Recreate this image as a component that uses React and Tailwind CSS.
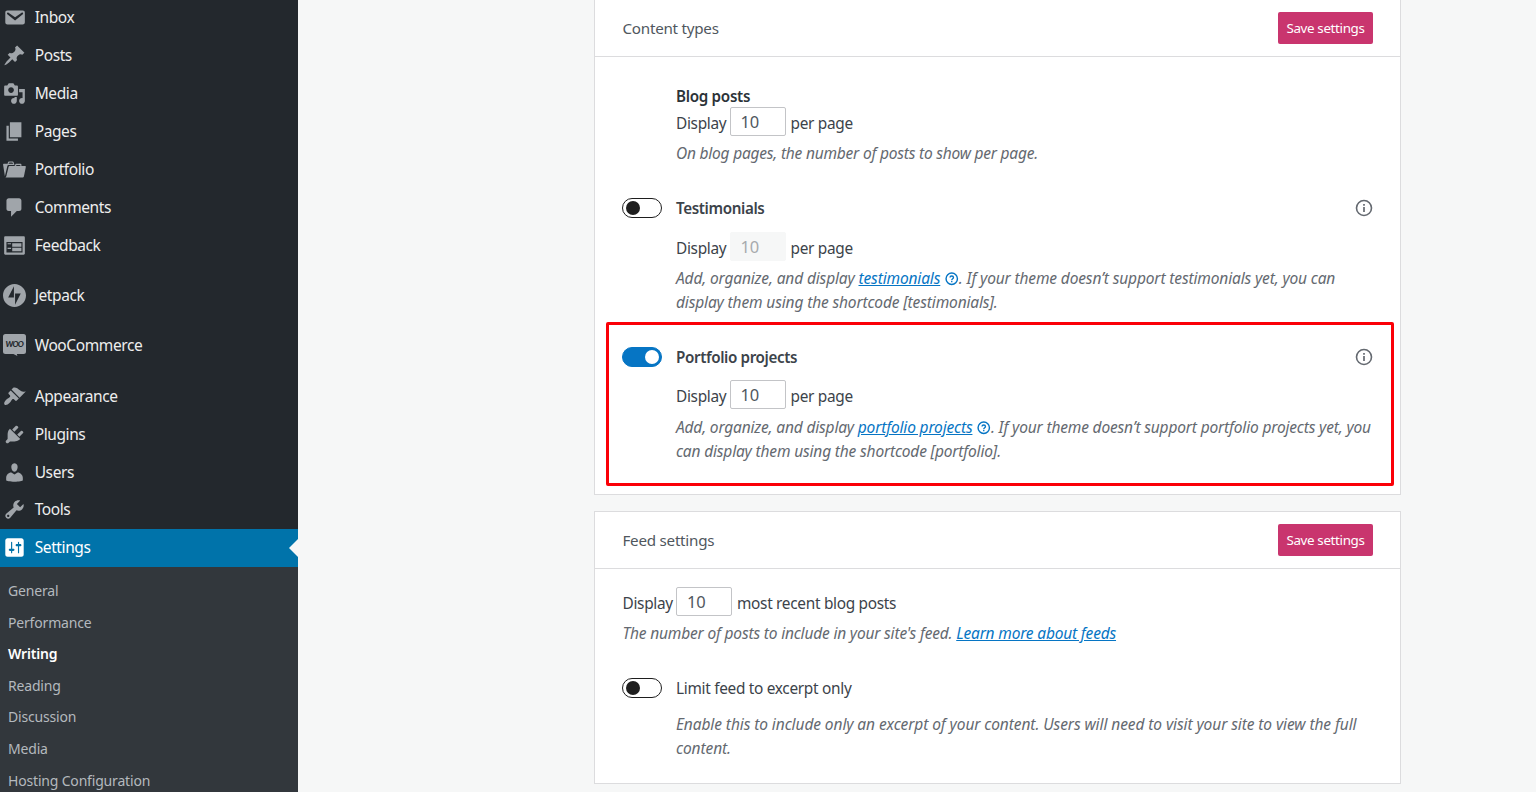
import React, { useState } from 'react'
import clsx from 'clsx'

const ICONS = {
  inbox: 'M3.87 4h13.25C18.37 4 19 4.59 19 5.79v8.42c0 1.19-.63 1.79-1.88 1.79H3.87c-1.25 0-1.88-.6-1.88-1.79V5.79c0-1.2.63-1.79 1.88-1.79zm6.62 8.6l6.74-5.53c.24-.2.43-.66.13-1.07-.29-.41-.82-.42-1.17-.17l-5.7 3.86L4.8 5.83c-.35-.25-.88-.24-1.17.17-.3.41-.11.87.13 1.07z',
  posts: 'M10.44 3.02l1.82-1.82 6.36 6.35-1.83 1.82c-1.05-.68-2.48-.57-3.41.36l-.75.75c-.92.93-1.04 2.35-.35 3.41l-1.83 1.82-2.41-2.41-2.8 2.79c-.42.42-3.38 2.71-3.8 2.29s1.86-3.39 2.28-3.81l2.79-2.79L4.1 9.36l1.83-1.82c1.05.69 2.48.57 3.4-.36l.75-.75c.93-.92 1.05-2.35.36-3.41z',
  media: 'M13 11V4c0-.55-.45-1-1-1h-1.67L9 1H5L3.67 3H2c-.55 0-1 .45-1 1v7c0 .55.45 1 1 1h10c.55 0 1-.45 1-1zM7 4.5c1.38 0 2.5 1.12 2.5 2.5S8.38 9.5 7 9.5 4.5 8.38 4.5 7 5.62 4.5 7 4.5zM14 6h5v10.5c0 1.38-1.12 2.5-2.5 2.5S14 17.88 14 16.5s1.12-2.5 2.5-2.5c.17 0 .34.02.5.05V9h-3V6zm-4 8.05V13h2v3.5c0 1.38-1.12 2.5-2.5 2.5S7 17.88 7 16.5 8.12 14 9.5 14c.17 0 .34.02.5.05z',
  pages: 'M6 15V2h10v13H6zm-1 1h8v2H3V5h2v11z',
  portfolio: 'M4 5H.78c-.37 0-.74.32-.69.84l1.56 9.99S3.5 8.47 3.86 6.7c.11-.53.61-.7.98-.7H10s-.7-2.08-.77-2.31C9.11 3.25 8.89 3 8.45 3H5.14c-.36 0-.7.23-.8.64C4.25 4.04 4 5 4 5zm4.88 0h-4s.42-1 .87-1h2.13c.48 0 1 1 1 1zM2.67 16.25c-.31.47-.76.75-1.26.75h15.73c.54 0 .92-.31 1.03-.83.44-2.19 1.68-8.44 1.68-8.44.07-.5-.3-.73-.62-.73H16V5.53c0-.16-.26-.53-.66-.53h-3.76c-.52 0-.87.58-.87.58L10 7H5.59c-.32 0-.63.19-.69.5 0 0-1.59 6.7-1.72 7.33-.07.37-.22.99-.51 1.42zM15.38 7H11s.58-1 1.13-1h2.29c.71 0 .96 1 .96 1z',
  comments: 'M5 2h9c1.1 0 2 .9 2 2v7c0 1.1-.9 2-2 2h-2l-5 5v-5H5c-1.1 0-2-.9-2-2V4c0-1.1.9-2 2-2z',
  feedback: 'M2 2h16c.55 0 1 .45 1 1v14c0 .55-.45 1-1 1H2c-.55 0-1-.45-1-1V3c0-.55.45-1 1-1zm15 14V7H3v9h14zM4 8v1h3V8H4zm4 0v3h8V8H8zm-4 4v1h3v-1H4zm4 0v3h8v-3H8z',
  appearance: 'M14.48 11.06L7.41 3.99l1.5-1.5c.5-.56 2.3-.47 3.51.32 1.21.8 1.43 1.28 2.91 2.1 1.18.64 2.45 1.26 4.45.85zm-.71.71L6.7 4.7 4.93 6.47c-.39.39-.39 1.02 0 1.41l1.06 1.06c.39.39.39 1.03 0 1.42-.6.6-1.43 1.11-2.21 1.69-.35.26-.7.53-1.01.84C1.43 14.23.4 16.08 1.4 17.07c.99 1 2.84-.03 4.18-1.36.31-.31.58-.66.85-1.02.57-.78 1.08-1.61 1.69-2.21.39-.39 1.02-.39 1.41 0l1.06 1.06c.39.39 1.02.39 1.41 0z',
  plugins: 'M13.11 4.36L9.87 7.6 8 5.73l3.24-3.24c.35-.34 1.05-.2 1.56.32.52.51.66 1.21.31 1.55zm-8 1.77l.91-1.12 9.01 9.01-1.19.84c-.71.71-2.63 1.16-3.82 1.16H6.14L4.9 17.26c-.59.59-1.54.59-2.12 0-.59-.58-.59-1.53 0-2.12l1.24-1.24v-3.88c0-1.13.4-3.19 1.09-3.89zm7.26 3.97l3.24-3.24c.34-.35 1.04-.21 1.55.31.52.51.66 1.21.31 1.55l-3.24 3.25z',
  users: 'M10 9.25c-2.27 0-2.73-3.44-2.73-3.44C7 4.02 7.82 2 9.97 2c2.16 0 2.98 2.02 2.71 3.81 0 0-.41 3.44-2.68 3.44zm0 2.57L12.72 10c2.39 0 4.52 2.33 4.52 4.53v2.49s-3.65 1.13-7.24 1.13c-3.65 0-7.24-1.13-7.24-1.13v-2.49c0-2.25 1.94-4.48 4.47-4.48z',
  tools: 'M16.68 9.77c-1.34 1.34-3.3 1.67-4.95.99l-5.41 6.52c-.99.99-2.59.99-3.58 0s-.99-2.59 0-3.57l6.52-5.42c-.68-1.65-.35-3.61.99-4.95 1.28-1.28 3.12-1.62 4.72-1.06l-2.89 2.89 2.82 2.82 2.86-2.87c.53 1.58.18 3.39-1.08 4.65zM3.81 16.21c.4.39 1.04.39 1.43 0 .4-.4.4-1.04 0-1.43-.39-.4-1.03-.4-1.43 0-.39.39-.39 1.03 0 1.43z',
  settings: 'M18 16V4c0-1.1-.9-2-2-2H4c-1.1 0-2 .9-2 2v12c0 1.1.9 2 2 2h12c1.1 0 2-.9 2-2zM8 11h1c.55 0 1 .45 1 1s-.45 1-1 1H8v1.5c0 .28-.22.5-.5.5s-.5-.22-.5-.5V13H6c-.55 0-1-.45-1-1s.45-1 1-1h1V5.5c0-.28.22-.5.5-.5s.5.22.5.5V11zm5-2h-1c-.55 0-1-.45-1-1s.45-1 1-1h1V5.5c0-.28.22-.5.5-.5s.5.22.5.5V7h1c.55 0 1 .45 1 1s-.45 1-1 1h-1v5.5c0 .28-.22.5-.5.5s-.5-.22-.5-.5V9z',
}

const MENU = [
  [
    { id: 'inbox', label: 'Inbox' },
    { id: 'posts', label: 'Posts' },
    { id: 'media', label: 'Media' },
    { id: 'pages', label: 'Pages' },
    { id: 'portfolio', label: 'Portfolio' },
    { id: 'comments', label: 'Comments' },
    { id: 'feedback', label: 'Feedback' },
  ],
  [{ id: 'jetpack', label: 'Jetpack' }],
  [{ id: 'woo', label: 'WooCommerce' }],
  [
    { id: 'appearance', label: 'Appearance' },
    { id: 'plugins', label: 'Plugins' },
    { id: 'users', label: 'Users' },
    { id: 'tools', label: 'Tools' },
    { id: 'settings', label: 'Settings' },
  ],
]

const SUBMENU = ['General', 'Performance', 'Writing', 'Reading', 'Discussion', 'Media', 'Hosting Configuration']

function MenuIcon({ id }) {
  if (id === 'jetpack') {
    return (
      <svg viewBox="0 0 32 32" className="size-[23px]" fill="currentColor">
        <path d="M16 0C7.2 0 0 7.2 0 16s7.2 16 16 16 16-7.2 16-16S24.8 0 16 0zM15.2 18.7H7.2l8-15.5v15.5zM16.8 28.8V13.3h7.9L16.8 28.8z" />
      </svg>
    )
  }
  if (id === 'woo') {
    return (
      <svg viewBox="0 0 23 23" className="size-[23px] overflow-visible">
        <path d="M2.500 0h18a2.500 2.500 0 0 1 2.500 2.500v15a2.500 2.500 0 0 1-2.500 2.500h-6.700l.6 2-4-2H2.500a2.500 2.500 0 0 1-2.500-2.500v-15a2.500 2.500 0 0 1 2.500-2.500z" fill="currentColor" />
        <text x="11.300" y="12.900" textAnchor="middle" fontFamily="Lato" fontWeight="900" fontStyle="italic" fontSize="8" letterSpacing="-0.800" fill="#23282d">WOO</text>
      </svg>
    )
  }
  return (
    <svg viewBox="0 0 20 20" className="size-[23px]" fill="currentColor">
      <path fillRule="evenodd" d={ICONS[id]} />
    </svg>
  )
}

function Sidebar({ active, onSelect }) {
  return (
    <nav className="flex w-[298.400px] shrink-0 flex-col overflow-hidden bg-[#23282d]">
      <div className="-mt-[1.200px] flex shrink-0 flex-col gap-[12.5px]">
        {MENU.map((group, i) => (
          <div key={i}>
            {group.map((item) => (
              <button
                key={item.id}
                onClick={() => onSelect(item.id)}
                className={clsx(
                  'relative flex h-[37.9px] w-full items-center gap-[8.400px] pl-[3.300px] text-left text-[15.500px] tracking-[-0.400px]',
                  active === item.id ? 'bg-[#0073aa] text-white' : 'text-[#eee]'
                )}
              >
                <span className={active === item.id ? 'text-white' : 'text-[#a0a5aa]'}>
                  <MenuIcon id={item.id} />
                </span>
                <span className="pt-[0.300px]">{item.label}</span>
                {active === item.id && (
                  <svg viewBox="0 0 9 18" className="absolute right-0 top-[10px] h-[18px] w-[9px]">
                    <path d="M9 0v18L0 9z" fill="#f6f7f7" />
                  </svg>
                )}
              </button>
            ))}
          </div>
        ))}
      </div>
      <ul className="grow bg-[#32373c] pt-[8px]">
        {SUBMENU.map((label) => (
          <li
            key={label}
            className={clsx(
              'flex h-[31.600px] items-center pl-2 text-[14px] tracking-[-0.180px]',
              label === 'Writing' ? 'font-semibold text-white' : 'text-[#b4b9be]'
            )}
          >
            {label}
          </li>
        ))}
      </ul>
    </nav>
  )
}

function Toggle({ checked, onChange }) {
  return (
    <button
      role="switch"
      aria-checked={checked}
      onClick={() => onChange(!checked)}
      className={clsx(
        'flex h-[20px] w-[40px] items-center rounded-full border',
        checked ? 'justify-end border-[#0675c4] bg-[#0675c4] px-[2px]' : 'border-[#1e1e1e] bg-white px-[3px]'
      )}
    >
      <span className={clsx('size-[14px] rounded-full', checked ? 'bg-white' : 'bg-[#1e1e1e]')} />
    </button>
  )
}

function InfoIcon() {
  return (
    <svg viewBox="0 0 18 18" className="size-[18px]" fill="none" stroke="#646970">
      <circle cx="9" cy="9" r="7.500" strokeWidth="1.600" />
      <path d="M9 8v5M9 5v1.700" strokeWidth="1.700" />
    </svg>
  )
}

function HelpIcon() {
  return (
    <svg viewBox="0 0 14 14" className="ml-[5px] inline-block size-[13.500px] align-[-1.500px]" fill="none" stroke="#0675c4">
      <circle cx="7" cy="7" r="5.900" strokeWidth="1.500" />
      <path d="M5.200 5.800c0-1 .8-1.700 1.800-1.700s1.800.7 1.800 1.600c0 1.200-1.800 1.300-1.800 2.600M7 9.200v1.400" strokeWidth="1.400" />
    </svg>
  )
}

function Card({ title, className, children }) {
  return (
    <section className={clsx('w-[807px] shrink-0 border border-[#dcdcde] bg-white', className)}>
      <header className="flex h-[57px] items-center justify-between border-b border-[#dcdcde] pl-[27.500px] pr-[27px]">
        <h2 className="pt-px text-[15.200px] tracking-[-0.250px] text-[#50575e]">{title}</h2>
        <button className="h-[32px] w-[95px] rounded-[2px] bg-[#c9356e] pt-px text-[13.400px] tracking-[-0.350px] whitespace-nowrap text-white">
          Save settings
        </button>
      </header>
      <div className="pl-[27.500px] pr-[27px]">{children}</div>
    </section>
  )
}

function DisplayField({ suffix = 'per page', disabled, className }) {
  return (
    <label className={clsx('flex h-[29px] items-center', className)}>
      <span className="w-[54px] pt-[4px]">Display</span>
      <input
        defaultValue="10"
        disabled={disabled}
        className={clsx(
          'h-[29px] w-[56px] rounded-[2px] border pl-[9.500px] text-[16.500px] tracking-[-0.200px]',
          disabled ? 'border-[#f6f7f7] bg-[#f6f7f7] text-[#a7aaad]' : 'border-[#c3c4c7] bg-white text-[#50575e]'
        )}
      />
      <span className="ml-[4.500px] pt-[4px]">{suffix}</span>
    </label>
  )
}

function ToggleRow({ label, bold, info, checked, onChange, className }) {
  return (
    <div className={clsx('flex h-6 items-center', className)}>
      <div className="-ml-[0.500px] w-[54px]">
        <Toggle checked={checked} onChange={onChange} />
      </div>
      <span className={clsx('grow pt-px', bold && 'text-[15.200px] font-semibold tracking-[-0.380px]')}>{label}</span>
      {info && <InfoIcon />}
    </div>
  )
}

function Description({ className, children }) {
  return (
    <p className={clsx('relative top-px text-[15.500px] leading-[23.700px] whitespace-nowrap text-[#646970] italic', className)}>
      {children}
    </p>
  )
}

function App() {
  const [active, setActive] = useState('settings')
  const [testimonials, setTestimonials] = useState(false)
  const [portfolio, setPortfolio] = useState(true)
  const [excerpt, setExcerpt] = useState(false)

  return (
    <div className="flex h-[792px] overflow-hidden bg-[#f6f7f7] font-['Noto_Sans',sans-serif] text-[15.400px] tracking-[-0.300px] text-[#3c434a]">
      <Sidebar active={active} onSelect={setActive} />

      <main className="relative flex grow flex-col pl-[295.600px]">
        <Card title="Content types" className="-mt-px h-[496px]">
          <div className="pt-[27px] pl-[53.500px]">
            <h3 className="h-[23px] text-[15.200px] leading-[25px] font-semibold tracking-[-0.300px] text-[#2c3338]">Blog posts</h3>
            <DisplayField />
            <Description className="mt-[5px] tracking-[-0.210px]">On blog pages, the number of posts to show per page.</Description>
          </div>

          <ToggleRow label="Testimonials" bold info checked={testimonials} onChange={setTestimonials} className="mt-[31.300px]" />
          <div className="pl-[53.500px]">
            <DisplayField disabled={!testimonials} className="mt-[12px]" />
            <Description className="mt-[5px] tracking-[-0.140px]">
              Add, organize, and display <a className="text-[#0675c4] underline">testimonials</a>
              <HelpIcon />. If your theme doesn’t support testimonials yet, you can
              <br />
              display them using the shortcode [testimonials].
            </Description>
          </div>

          <ToggleRow label="Portfolio projects" bold info checked={portfolio} onChange={setPortfolio} className="mt-[31.600px]" />
          <div className="pl-[53.500px]">
            <DisplayField disabled={!portfolio} className="mt-[11px]" />
            <Description className="mt-[6px] tracking-[-0.165px]">
              Add, organize, and display <a className="text-[#0675c4] underline">portfolio projects</a>
              <HelpIcon />. If your theme doesn’t support portfolio projects yet, you
              <br />
              can display them using the shortcode [portfolio].
            </Description>
          </div>
        </Card>

        {/* Highlight around the portfolio option */}
        <div className="pointer-events-none absolute top-[322px] left-[307.600px] h-[164px] w-[788px] rounded-[2px] border-3 border-[#fb0007]" />

        <Card title="Feed settings" className="mt-[16px] h-[273px]">
          <DisplayField suffix="most recent blog posts" className="mt-[18px]" />
          <Description className="mt-[5px] tracking-[-0.180px]">
            The number of posts to include in your site's feed. <a className="text-[#0675c4] underline">Learn more about feeds</a>
          </Description>
          <ToggleRow label="Limit feed to excerpt only" checked={excerpt} onChange={setExcerpt} className="mt-[31.300px]" />
          <Description className="mt-[12px] pl-[53.500px] tracking-[-0.090px]">
            Enable this to include only an excerpt of your content. Users will need to visit your site to view the full
            <br />
            content.
          </Description>
        </Card>
      </main>
    </div>
  )
}

export default App
